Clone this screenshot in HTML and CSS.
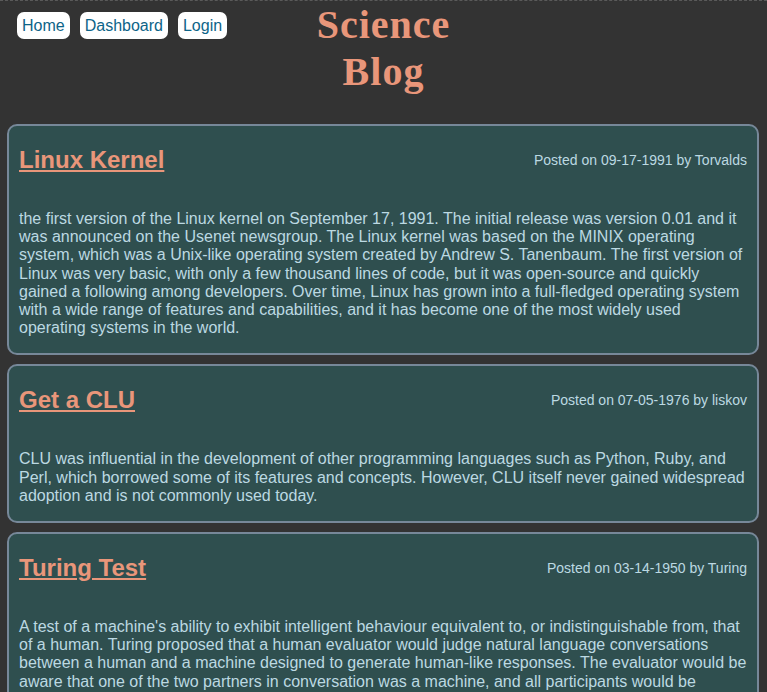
FILE: index.html
```html
<!DOCTYPE html>
<html lang="en">
<head>
<meta charset="utf-8">
<title>Science Blog</title>
<link rel="stylesheet" href="styles.css">
</head>
<body>
<header class="site-header">
  <nav class="nav">
    <a class="nav-btn" href="#">Home</a>
    <a class="nav-btn" href="#">Dashboard</a>
    <a class="nav-btn" href="#">Login</a>
  </nav>
  <h1 class="site-title">Science Blog</h1>
  <div class="spacer"></div>
</header>
<main class="posts">
  <article class="post">
    <div class="post-head">
      <h2 class="post-title"><a href="#">Linux Kernel</a></h2>
      <span class="post-meta">Posted on 09-17-1991 by Torvalds</span>
    </div>
    <p class="post-body">the first version of the Linux kernel on September 17, 1991. The initial release was version 0.01 and it was announced on the Usenet newsgroup. The Linux kernel was based on the MINIX operating system, which was a Unix-like operating system created by Andrew S. Tanenbaum. The first version of Linux was very basic, with only a few thousand lines of code, but it was open-source and quickly gained a following among developers. Over time, Linux has grown into a full-fledged operating system with a wide range of features and capabilities, and it has become one of the most widely used operating systems in the world.</p>
  </article>
  <article class="post">
    <div class="post-head">
      <h2 class="post-title"><a href="#">Get a CLU</a></h2>
      <span class="post-meta">Posted on 07-05-1976 by liskov</span>
    </div>
    <p class="post-body">CLU was influential in the development of other programming languages such as Python, Ruby, and Perl, which borrowed some of its features and concepts. However, CLU itself never gained widespread adoption and is not commonly used today.</p>
  </article>
  <article class="post">
    <div class="post-head">
      <h2 class="post-title"><a href="#">Turing Test</a></h2>
      <span class="post-meta">Posted on 03-14-1950 by Turing</span>
    </div>
    <p class="post-body">A test of a machine's ability to exhibit intelligent behaviour equivalent to, or indistinguishable from, that of a human. Turing proposed that a human evaluator would judge natural language conversations between a human and a machine designed to generate human-like responses. The evaluator would be aware that one of the two partners in conversation was a machine, and all participants would be separated from one another. The conversation would be limited to a text-only channel such as a computer keyboard and screen so the result would not depend on the machine's ability to render words as speech.</p>
  </article>
</main>
</body>
</html>
```
FILE: styles.css
```css
html, body {
  margin: 0;
  padding: 0;
  background: #333333;
}
body {
  font-family: "Liberation Sans", Arial, sans-serif;
  font-size: 16px;
  color: #bcd9e2;
  border-top: 1px dashed #5a5a5a;
}
.site-header {
  display: grid;
  grid-template-columns: 1fr auto 1fr;
  align-items: start;
  height: 124px;
  margin-top: -1px;
}
.nav {
  display: flex;
  gap: 10px;
  padding: 12px 0 0 17px;
}
.nav-btn {
  display: block;
  background: #ffffff;
  color: #0d6488;
  text-decoration: none;
  padding: 4px 5px;
  border-radius: 7px;
  line-height: 19px;
}
.site-title {
  margin: 1px 0 0;
  width: min-content;
  text-align: center;
  font-family: "Liberation Serif", "Times New Roman", serif;
  font-size: 40px;
  font-weight: bold;
  letter-spacing: 1px;
  line-height: 47px;
  color: #e9967a;
}
.posts {
  display: flex;
  flex-direction: column;
  gap: 9px;
  margin: 0 8px 0 7px;
}
.post {
  background: #2f4f4f;
  border: 2px solid #778899;
  border-radius: 10px;
  padding: 0 10px;
}
.post-head {
  display: flex;
  justify-content: space-between;
  align-items: center;
}
.post-title {
  margin: 20px 0;
  font-size: 24px;
  font-weight: bold;
}
.post-title a {
  color: #e9967a;
}
.post-meta {
  font-size: 14px;
}
.post-body {
  margin: 16px 0;
  line-height: 18.2px;
}
```
